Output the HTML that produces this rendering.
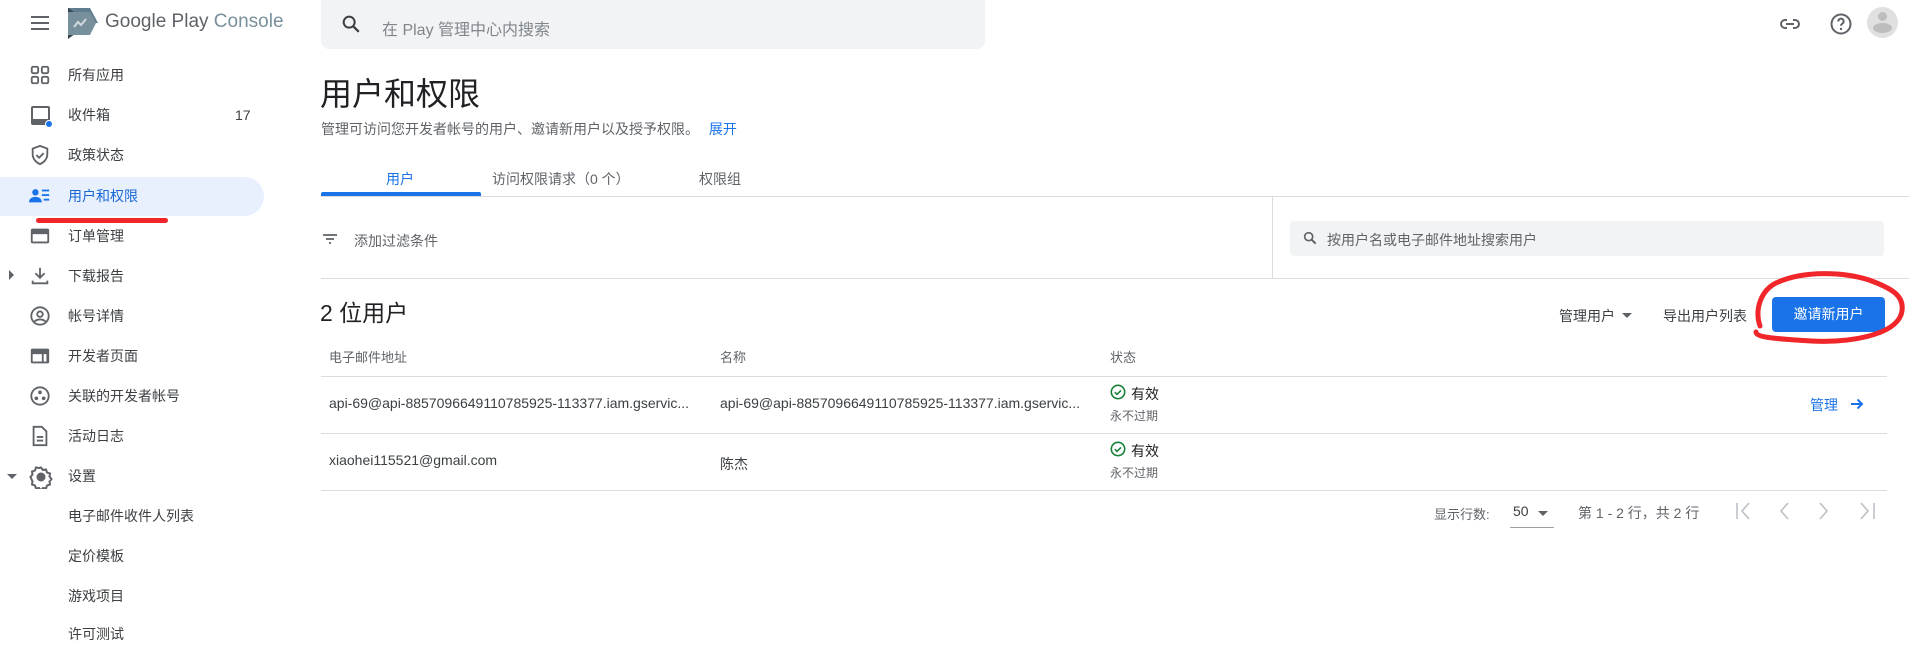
<!DOCTYPE html>
<html><head><meta charset="utf-8"><style>
*{box-sizing:border-box;margin:0;padding:0}
body{width:1909px;height:635px;overflow:hidden;background:#fff;font-family:"Liberation Sans","Noto Sans CJK SC",sans-serif;color:#202124;position:relative;font-size:14px}
.a{position:absolute;white-space:nowrap}
.g{color:#5f6368}
.nav{position:absolute;left:0;width:264px;height:40px;display:flex;align-items:center;font-size:14px;color:#3c4043}
.nav svg{position:absolute;left:29px;top:9px}
.nav span{position:absolute;left:68px}
.hl{position:absolute;height:1px;background:#dadce0}
</style></head><body>
<!-- header -->
<svg class="a" style="left:28px;top:11px" width="24" height="24" viewBox="0 0 24 24"><path d="M3 6h18M3 12h18M3 18h18" stroke="#5f6368" stroke-width="2"/></svg>
<svg class="a" style="left:68px;top:8px" width="30" height="31" viewBox="0 0 30 31"><path d="M0 0h22l8 15-8 0H0z" fill="#5f7d8e"/><path d="M0 0v31l22-16z" fill="#37474f"/><path d="M0 4h22l6 11-6 12H0z" fill="#78909c"/><path d="M6 19l4-5 3 3 5-6" stroke="#cfd8dc" stroke-width="2" fill="none"/></svg>
<div class="a" style="left:105px;top:11px;font-size:19px;color:#5f6368">Google Play <span style="color:#78909c">Console</span></div>
<div class="a" style="left:321px;top:0;width:664px;height:49px;background:#f1f3f4;border-radius:0 0 8px 8px"></div>
<svg class="a" style="left:340px;top:13px" width="22" height="22" viewBox="0 0 24 24"><circle cx="10" cy="10" r="6" stroke="#3c4043" stroke-width="2.2" fill="none"/><path d="M14.5 14.5l6 6" stroke="#3c4043" stroke-width="2.5"/></svg>
<div class="a" style="left:382px;top:16px;font-size:16px;color:#80868b">在 Play 管理中心内搜索</div>
<svg class="a" style="left:1778px;top:12px" width="24" height="24" viewBox="0 0 24 24"><path d="M9 8H7a4 4 0 000 8h2M15 8h2a4 4 0 010 8h-2M8 12h8" stroke="#5f6368" stroke-width="2" fill="none"/></svg>
<svg class="a" style="left:1829px;top:12px" width="24" height="24" viewBox="0 0 24 24"><circle cx="12" cy="12" r="9.5" stroke="#5f6368" stroke-width="2" fill="none"/><path d="M9.3 9.5a2.7 2.7 0 115 1.3c-.8 1-2.3 1.4-2.3 3" stroke="#5f6368" stroke-width="2" fill="none"/><circle cx="12" cy="17" r="1.2" fill="#5f6368"/></svg>
<div class="a" style="left:1867px;top:7px;width:31px;height:31px;border-radius:50%;background:#e0e0e0;overflow:hidden"><div style="position:absolute;left:11px;top:5px;width:9px;height:9px;border-radius:50%;background:#bdbdbd"></div><div style="position:absolute;left:6px;top:16px;width:19px;height:10px;border-radius:50%;background:#bdbdbd"></div></div>

<!-- sidebar -->
<div class="nav" style="top:55px"><svg width="22" height="22" viewBox="0 0 24 24" fill="none" stroke="#5f6368" stroke-width="2"><rect x="3" y="3" width="7" height="7" rx="1.5"/><rect x="14" y="3" width="7" height="7" rx="1.5"/><rect x="3" y="14" width="7" height="7" rx="1.5"/><rect x="14" y="14" width="7" height="7" rx="1.5"/></svg><span>所有应用</span></div>
<div class="nav" style="top:95px"><svg width="24" height="24" viewBox="0 0 24 24"><rect x="2" y="2" width="19" height="19" rx="2" fill="#5f6368"/><rect x="4" y="4" width="15" height="11" fill="#fff"/><circle cx="20" cy="20" r="3.5" fill="#1a73e8" stroke="#fff" stroke-width="1"/></svg><span>收件箱</span><b class="a" style="left:235px;font-weight:normal">17</b></div>
<div class="nav" style="top:135px"><svg width="22" height="22" viewBox="0 0 24 24" fill="none" stroke="#5f6368" stroke-width="2"><path d="M12 2l8 3v6c0 5-3.5 9-8 11-4.5-2-8-6-8-11V5z"/><path d="M8 12l3 3 5-5"/></svg><span>政策状态</span></div>
<div class="a" style="left:0;top:177px;width:264px;height:39px;background:#e8f0fe;border-radius:0 20px 20px 0"></div>
<div class="nav" style="top:176px;color:#1967d2"><svg width="22" height="22" viewBox="0 0 24 24" fill="#1a73e8"><circle cx="7" cy="8" r="3.5"/><path d="M0 19c0-4 3-6 7-6s7 2 7 6z"/><rect x="14" y="5" width="8" height="2"/><rect x="14" y="10" width="8" height="2"/><rect x="16" y="15" width="6" height="2"/></svg><span>用户和权限</span></div>
<div class="a" style="left:36px;top:218px;width:132px;height:5px;background:#f0262a;border-radius:3px"></div>
<div class="nav" style="top:216px"><svg width="22" height="22" viewBox="0 0 24 24"><rect x="2" y="4" width="20" height="16" rx="2" fill="#5f6368"/><rect x="4" y="10" width="16" height="8" fill="#fff"/></svg><span>订单管理</span></div>
<div class="nav" style="top:256px"><svg width="22" height="22" viewBox="0 0 24 24" fill="none" stroke="#5f6368" stroke-width="2"><path d="M12 3v11M7 9l5 5 5-5M4 17v3h16v-3"/></svg><span>下载报告</span></div>
<div class="a" style="left:9px;top:270px;border-left:5px solid #5f6368;border-top:5px solid transparent;border-bottom:5px solid transparent"></div>
<div class="nav" style="top:296px"><svg width="22" height="22" viewBox="0 0 24 24" fill="none" stroke="#5f6368" stroke-width="2"><circle cx="12" cy="12" r="9.5"/><circle cx="12" cy="10" r="3"/><path d="M6 18c3-3 9-3 12 0"/></svg><span>帐号详情</span></div>
<div class="nav" style="top:336px"><svg width="22" height="22" viewBox="0 0 24 24"><rect x="2" y="4" width="20" height="16" rx="1.5" fill="#5f6368"/><rect x="4" y="10" width="10" height="8" fill="#fff"/><rect x="16" y="10" width="3" height="8" fill="#fff"/></svg><span>开发者页面</span></div>
<div class="nav" style="top:376px"><svg width="22" height="22" viewBox="0 0 24 24"><circle cx="12" cy="12" r="9.5" fill="none" stroke="#5f6368" stroke-width="2"/><circle cx="12" cy="8" r="2" fill="#5f6368"/><circle cx="8" cy="14.5" r="2" fill="#5f6368"/><circle cx="16" cy="14.5" r="2" fill="#5f6368"/></svg><span>关联的开发者帐号</span></div>
<div class="nav" style="top:416px"><svg width="22" height="22" viewBox="0 0 24 24" fill="none" stroke="#5f6368" stroke-width="2"><path d="M5 2h9l5 5v15H5z"/><path d="M8.5 13h7M8.5 17h7"/></svg><span>活动日志</span></div>
<div class="nav" style="top:456px"><svg width="24" height="24" viewBox="0 0 24 24" fill="none" stroke="#5f6368" stroke-width="2"><path d="M12 2.5l2 2.5 3-.5 1 3 3 1-.5 3 2 2.5-2 2.5.5 3-3 1-1 3-3-.5-2 2.5-2-2.5-3 .5-1-3-3-1 .5-3L1.5 12l2-2.5-.5-3 3-1 1-3 3 .5z"/><circle cx="12" cy="12" r="3.5" fill="#5f6368"/></svg><span>设置</span></div>
<div class="a" style="left:7px;top:474px;border-top:5px solid #5f6368;border-left:5px solid transparent;border-right:5px solid transparent"></div>
<div class="nav" style="top:496px"><span>电子邮件收件人列表</span></div>
<div class="nav" style="top:536px"><span>定价模板</span></div>
<div class="nav" style="top:576px"><span>游戏项目</span></div>
<div class="nav" style="top:614px"><span>许可测试</span></div>

<!-- main -->
<div class="a" style="left:320px;top:69px;font-size:32px;color:#202124">用户和权限</div>
<div class="a g" style="left:321px;top:119px;font-size:14px">管理可访问您开发者帐号的用户、邀请新用户以及授予权限。 <span style="color:#1a73e8;margin-left:6px">展开</span></div>
<div class="a" style="left:386px;top:169px;font-size:14px;color:#1a73e8">用户</div>
<div class="a" style="left:492px;top:169px;font-size:14px;color:#5f6368">访问权限请求（0 个）</div>
<div class="a" style="left:699px;top:169px;font-size:14px;color:#5f6368">权限组</div>
<div class="a" style="left:321px;top:192px;width:160px;height:4px;background:#1a73e8;border-radius:2px 2px 0 0"></div>
<div class="hl" style="left:321px;top:196px;width:1588px"></div>
<svg class="a" style="left:321px;top:230px" width="18" height="18" viewBox="0 0 18 18"><path d="M2 5h14M5 9h8M8 13h2" stroke="#5f6368" stroke-width="1.8"/></svg>
<div class="a g" style="left:354px;top:231px;font-size:14px">添加过滤条件</div>
<div class="a" style="left:1272px;top:196px;width:1px;height:82px;background:#dadce0"></div>
<div class="a" style="left:1290px;top:221px;width:594px;height:35px;background:#f1f3f4;border-radius:4px"></div>
<svg class="a" style="left:1302px;top:230px" width="16" height="16" viewBox="0 0 24 24"><circle cx="10" cy="10" r="6" stroke="#5f6368" stroke-width="2.5" fill="none"/><path d="M14.5 14.5l6 6" stroke="#5f6368" stroke-width="3"/></svg>
<div class="a g" style="left:1327px;top:230px;font-size:14px">按用户名或电子邮件地址搜索用户</div>
<div class="hl" style="left:321px;top:278px;width:1588px"></div>

<div class="a" style="left:320px;top:294px;font-size:23px;color:#202124">2 位用户</div>
<div class="a" style="left:1559px;top:306px;font-size:14px;color:#3c4043">管理用户</div>
<div class="a" style="left:1622px;top:313px;border-top:5px solid #5f6368;border-left:5px solid transparent;border-right:5px solid transparent"></div>
<div class="a" style="left:1663px;top:306px;font-size:14px;color:#3c4043">导出用户列表</div>
<div class="a" style="left:1772px;top:297px;width:113px;height:35px;background:#1a73e8;border-radius:4px;color:#fff;font-size:14px;text-align:center;line-height:35px">邀请新用户</div>
<svg class="a" style="left:1744px;top:268px" width="165" height="82" viewBox="0 0 165 82"><path d="M32 15C60 2 100 4 125 12c22 8 38 16 32 35-8 20-50 28-90 26-30-2-55-3-55-9M32 15C18 22 10 40 16 58" stroke="#f0262a" stroke-width="5" fill="none" stroke-linecap="round"/></svg>

<div class="a g" style="left:329px;top:347px;font-size:13px">电子邮件地址</div>
<div class="a g" style="left:720px;top:347px;font-size:13px">名称</div>
<div class="a g" style="left:1110px;top:347px;font-size:13px">状态</div>
<div class="hl" style="left:321px;top:376px;width:1566px"></div>
<div class="a" style="left:329px;top:395px;font-size:14px;color:#3c4043">api-69@api-8857096649110785925-113377.iam.gservic...</div>
<div class="a" style="left:720px;top:395px;font-size:14px;color:#3c4043">api-69@api-8857096649110785925-113377.iam.gservic...</div>
<svg class="a" style="left:1110px;top:384px" width="16" height="16" viewBox="0 0 16 16"><circle cx="8" cy="8" r="6.7" stroke="#188038" stroke-width="1.6" fill="none"/><path d="M4.8 8.2l2.2 2.2 4-4" stroke="#188038" stroke-width="1.6" fill="none"/></svg>
<div class="a" style="left:1131px;top:384px;font-size:14px">有效</div>
<div class="a g" style="left:1110px;top:407px;font-size:12px">永不过期</div>
<div class="a" style="left:1810px;top:395px;font-size:14px;color:#1a73e8">管理</div>
<svg class="a" style="left:1849px;top:396px" width="16" height="16" viewBox="0 0 16 16"><path d="M2 8h11M8.5 3.5L13 8l-4.5 4.5" stroke="#1a73e8" stroke-width="2" fill="none"/></svg>
<div class="hl" style="left:321px;top:433px;width:1566px"></div>
<div class="a" style="left:329px;top:452px;font-size:14px;color:#3c4043">xiaohei115521@gmail.com</div>
<div class="a" style="left:720px;top:454px;font-size:14px;color:#3c4043">陈杰</div>
<svg class="a" style="left:1110px;top:441px" width="16" height="16" viewBox="0 0 16 16"><circle cx="8" cy="8" r="6.7" stroke="#188038" stroke-width="1.6" fill="none"/><path d="M4.8 8.2l2.2 2.2 4-4" stroke="#188038" stroke-width="1.6" fill="none"/></svg>
<div class="a" style="left:1131px;top:441px;font-size:14px">有效</div>
<div class="a g" style="left:1110px;top:464px;font-size:12px">永不过期</div>
<div class="hl" style="left:321px;top:490px;width:1566px"></div>

<div class="a g" style="left:1434px;top:504px;font-size:13px">显示行数:</div>
<div class="a" style="left:1513px;top:503px;font-size:14px;color:#3c4043">50</div>
<div class="a" style="left:1538px;top:511px;border-top:5px solid #5f6368;border-left:5px solid transparent;border-right:5px solid transparent"></div>
<div class="hl" style="left:1510px;top:527px;width:44px;background:#9aa0a6"></div>
<div class="a g" style="left:1578px;top:503px;font-size:14px">第 1 - 2 行，共 2 行</div>
<svg class="a" style="left:1734px;top:500px" width="150" height="22" viewBox="0 0 150 22" fill="none" stroke="#bdc1c6" stroke-width="1.6"><path d="M3 3v16M15 3l-7 8 7 8M54 3l-7 8 7 8M86 3l7 8-7 8M127 3l7 8-7 8M140 3v16"/></svg>
</body></html>
